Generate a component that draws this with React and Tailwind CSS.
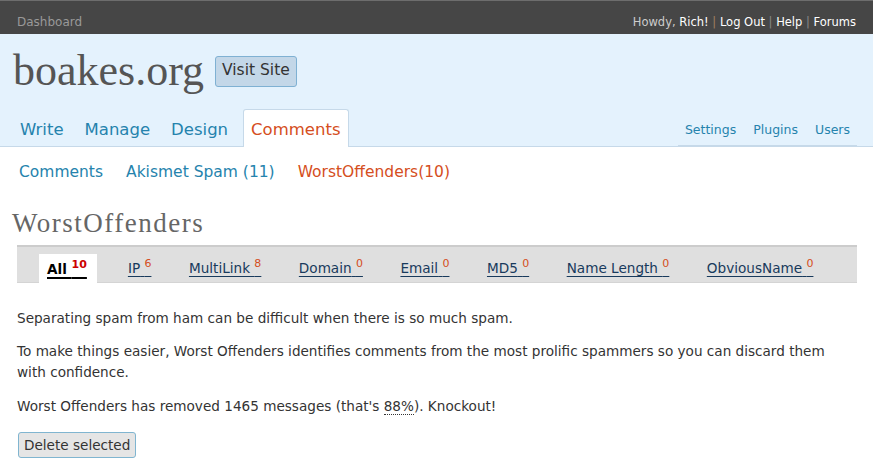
const sans = { fontFamily: '"DejaVu Sans", Verdana, sans-serif' };

function TopBar() {
  return (
    <div className="h-[34px] bg-[#464646] border-t border-[#6d6d6d] flex items-end justify-between px-[17px] pb-[3px] text-[11.5px]" style={sans}>
      <span className="text-[#999] text-[12px]">Dashboard</span>
      <span className="text-[#ccc]">
        Howdy, <span className="text-white">Rich!</span>
        <span className="text-[#a08060]"> | </span>
        <span className="text-white">Log Out</span>
        <span className="text-[#888]"> | </span>
        <span className="text-white">Help</span>
        <span className="text-[#888]"> | </span>
        <span className="text-white">Forums</span>
      </span>
    </div>
  );
}

function Header() {
  const tabs = ["Write", "Manage", "Design"];
  return (
    <div className="bg-[#e4f2fd] border-b border-[#c6d9e9]" style={sans}>
      <div className="flex items-center gap-[11px] pl-[13px] pt-[14px] h-[74px]">
        <span className="text-[44px] leading-none text-[#555] font-['Liberation_Serif',serif] -mt-[14px]">boakes.org</span>
        <span className="bg-[#c3d7e8] border border-[#7fb1d3] rounded-[3px] text-[#333] text-[15.5px] h-[31px] px-[6px] flex items-center -mt-[14px]">Visit Site</span>
      </div>
      <div className="flex items-end justify-between pl-[13px] pr-[16px] h-[38px]">
        <div className="flex items-end gap-[7px] h-full">
          {tabs.map((t) => (
            <span key={t} className="px-[7px] pb-[3px] text-[16.5px] text-[#2583ad]">{t}</span>
          ))}
          <span className="h-full bg-white border border-b-0 border-[#c6d9e9] rounded-t-[3px] px-[7px] ml-px flex items-center text-[16.5px] text-[#d54e21] -mb-px pt-[3px]">Comments</span>
        </div>
        <div className="flex gap-[17px] border-b-2 border-[#c6d9e9] px-[7px] pb-[5px] -mb-px text-[12.5px] text-[#2583ad]">
          <span>Settings</span>
          <span>Plugins</span>
          <span>Users</span>
        </div>
      </div>
    </div>
  );
}

function FilterTabs() {
  const items = [
    ["IP", "6"],
    ["MultiLink", "8"],
    ["Domain", "0"],
    ["Email", "0"],
    ["MD5", "0"],
    ["Name Length", "0"],
    ["ObviousName", "0"],
  ];
  return (
    <div className="mx-[17px] mr-[16px] bg-[#dfdfdf] border-t-2 border-[#ccc] border-b border-b-[#d4d4d4] h-[38px] flex items-end pl-[22px] text-[13.6px]" style={sans}>
      <div className="bg-white h-[29px] pl-[8px] pr-[10px] flex items-center -mb-px">
        <span className="font-bold text-black underline decoration-2 underline-offset-[3px]">
          All <sup className="text-[#c00] text-[11px]">10</sup>
        </span>
      </div>
      <div className="flex gap-[37.5px] ml-[31px] h-[29px] items-center">
        {items.map(([n, c]) => (
          <span key={n} className="text-[#183a5c] underline underline-offset-[3px]">
            {n} <sup className="text-[#d54e21] text-[11px]">{c}</sup>
          </span>
        ))}
      </div>
    </div>
  );
}

export default function App() {
  return (
    <div className="w-[873px] h-[473px] bg-white overflow-hidden">
      <TopBar />
      <Header />
      <div className="flex gap-[23px] pl-[19px] pt-[14px] text-[15.5px] text-[#2583ad]" style={sans}>
        <span>Comments</span>
        <span>Akismet Spam (11)</span>
        <span className="text-[#d54e21]">WorstOffenders(10)</span>
      </div>
      <h2 className="pl-[12px] mt-[26px] text-[27px] tracking-[1.5px] text-[#666] font-['Liberation_Serif',serif] leading-none">WorstOffenders</h2>
      <div className="mt-[8px]">
        <FilterTabs />
      </div>
      <div className="px-[17px] text-[13.6px] text-[#333] leading-[21px]" style={sans}>
        <p className="mt-[25px]">Separating spam from ham can be difficult when there is so much spam.</p>
        <p className="mt-[12px]">To make things easier, Worst Offenders identifies comments from the most prolific spammers so you can discard them with confidence.</p>
        <p className="mt-[13px]">
          Worst Offenders has removed 1465 messages (that's <span className="border-b border-dotted border-[#333]">88%</span>). Knockout!
        </p>
        <button className="mt-[15px] ml-px bg-[#e5e5e5] border border-[#80b5d0] rounded-[3px] h-[26px] px-[5px] text-[13.6px] text-[#333]">Delete selected</button>
      </div>
    </div>
  );
}
